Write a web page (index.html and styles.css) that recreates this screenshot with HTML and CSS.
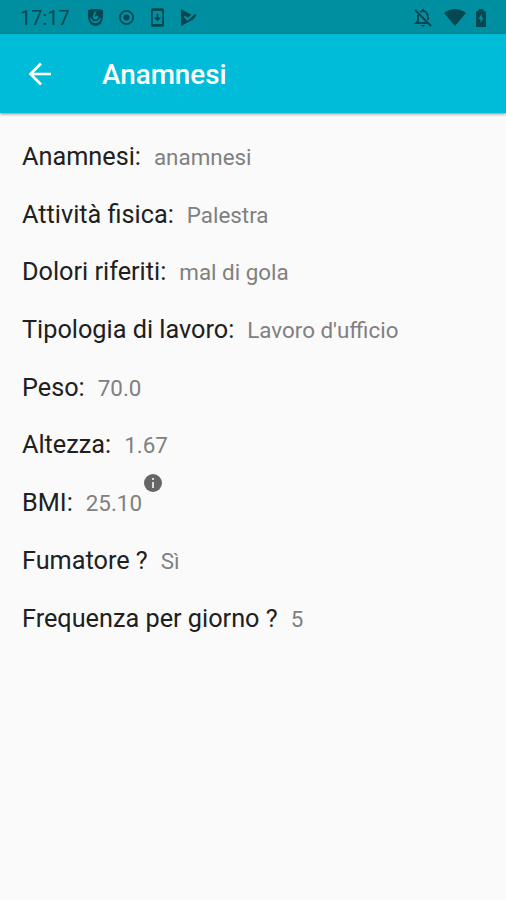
FILE: index.html
```html
<!DOCTYPE html>
<html lang="it">
<head><meta charset="utf-8"><title>Anamnesi</title><link rel="stylesheet" href="styles.css"></head>
<body>
<header class="status">
  <span class="clock">17:17</span>
  <svg class="face" viewBox="0 0 18 18"><path fill="currentColor" fill-rule="evenodd" d="M1 1Q9-1 17 1V8Q16 18 9 18Q2 18 1 8ZM8 3L6 8Q7 11 9 11Q12 11 12 8Q11 6 9 8H8L10 3ZM3 9Q4 15 9 15Q14 15 15 9L13.500 10Q12 13 9 13Q6 13 4.500 10Z"/></svg>
  <svg class="target" viewBox="0 0 18 18"><circle cx="9" cy="9" r="7" fill="none" stroke="currentColor" stroke-width="1.8"/><circle cx="9" cy="9" r="3.2" fill="currentColor"/></svg>
  <svg class="phone" viewBox="0 0 14 20"><path fill="currentColor" fill-rule="evenodd" d="M2 0H12Q14 0 14 2V18Q14 20 12 20H2Q0 20 0 18V2Q0 0 2 0ZM2 3V17H12V3ZM6 6H8V10H11L7 14L3 10H6Z"/></svg>
  <svg class="play" viewBox="0 0 18 18"><path fill="currentColor" d="M1 0L12 6L8 9.500L5.500 7L4 8.500L8 12.500L16 5L17.500 6.500L14 11L1 18Z"/></svg>
  <svg class="bell" viewBox="0 0 20 20"><path fill="none" stroke="currentColor" stroke-width="1.9" d="M2 2L18 18M5 7V13L3 15H15M7 4Q10 2 13 4Q15 6 15 12"/><path fill="currentColor" d="M8 17H12Q10 20 8 17M9 1H11V4H9Z"/></svg>
  <svg class="wifi" viewBox="0 0 22 17"><path fill="currentColor" d="M0 4Q11-4 22 4L11 17Z"/></svg>
  <svg class="battery" viewBox="0 0 12 18"><path fill="currentColor" fill-rule="evenodd" d="M4 0H8V1L11 3V18H1V3L4 1ZM7 5L3.500 10H5.500V14L8.500 9H7Z"/></svg>
</header>
<nav class="toolbar">
  <svg class="back" viewBox="0 0 24 24"><path d="M23 12H2M13 1.500L2.500 12L13 22.500"/></svg>
  <h1>Anamnesi</h1>
</nav>
<main>
  <p><b>Anamnesi:</b><span>anamnesi</span></p>
  <p><b>Attività fisica:</b><span>Palestra</span></p>
  <p><b>Dolori riferiti:</b><span>mal di gola</span></p>
  <p><b>Tipologia di lavoro:</b><span>Lavoro d'ufficio</span></p>
  <p><b>Peso:</b><span>70.0</span></p>
  <p><b>Altezza:</b><span>1.67</span></p>
  <p><b>BMI:</b><span>25.10</span><svg class="info" viewBox="0 0 18 18"><circle cx="9" cy="9" r="9"/><path d="M8 4H10V6H8ZM8 8H10V14H8Z"/></svg></p>
  <p><b>Fumatore ?</b><span>Sì</span></p>
  <p><b>Frequenza per giorno ?</b><span>5</span></p>
</main>
</body></html>
```
FILE: styles.css
```css
*{box-sizing:border-box}
body{margin:0;height:900px;overflow:hidden;background:#fafafa;font-family:Roboto,sans-serif}
.status{height:34px;display:flex;align-items:center;padding:1px 19px 0 20px;background:#008fa1;color:#064852}
.clock{font-size:20px;width:67px}
.face,.target,.play{width:17px;height:17px}
.target{margin-left:14px}.phone{width:13px;height:19px;margin-left:16px}.play{margin-left:16px}
.bell{width:20px;height:20px;margin-left:auto}.wifi{width:22px;height:17px;margin-left:11px}.battery{width:12px;height:18px;margin-left:9px}
.toolbar{height:79px;display:flex;align-items:center;padding-left:28px;background:#00bcd9;box-shadow:0 1px 3px #0007}
.back{width:24px;height:24px;fill:none;stroke:#fff;stroke-width:2.6}
h1{margin:3px 0 0 50px;font-size:27.8px;line-height:36px;font-weight:500;color:#fff}
main{padding:15px 22px}
p{margin:0;height:57.7px;display:flex;align-items:baseline;line-height:58px;white-space:nowrap}
b{font-size:25.25px;font-weight:400;color:#202020}
span{font-size:23px}
p span{margin-left:13px;color:#808080;font-size:22.4px}
.info{width:18px;height:18px;margin-left:2px;align-self:flex-start;fill:#666}
.info path{fill:#ddd}
```
